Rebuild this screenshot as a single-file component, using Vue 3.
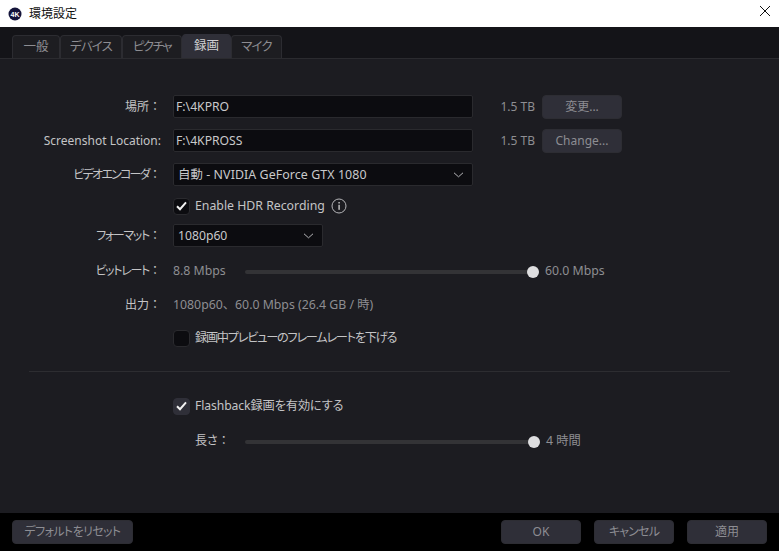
<script setup>
const tabs = [
  { label: '一般', w: 48, cls: '' },
  { label: 'デバイス', w: 62, cls: 't-k1' },
  { label: 'ピクチャ', w: 60, cls: 't-k2' },
  { label: '録画', w: 49, cls: 'active' },
  { label: 'マイク', w: 51, cls: 't-k1' },
]
</script>

<template>
  <div class="win">
    <header class="title">
      <svg class="logo" width="14" height="14" viewBox="0 0 14 14">
        <circle cx="7" cy="7" r="6.5" fill="#14143a" />
        <text x="7" y="9.6" text-anchor="middle" class="logo-t">4K</text>
      </svg>
      <span>環境設定</span>
      <svg class="close" width="12" height="12" viewBox="0 0 12 12">
        <path d="M1 1L11 11M11 1L1 11" stroke="#111" stroke-width="1" fill="none" />
      </svg>
    </header>

    <nav class="tabs">
      <div
        v-for="t in tabs"
        :key="t.label"
        class="tab"
        :class="t.cls"
        :style="{ width: t.w + 'px' }"
      >{{ t.label }}</div>
    </nav>

    <main class="body">
      <div class="row r-path">
        <label class="lbl">場所<span class="colon">：</span></label>
        <div class="field w300">F:\4KPRO</div>
        <span class="size">1.5 TB</span>
        <button class="btn change">変更...</button>
      </div>
      <div class="row r-path">
        <label class="lbl lat">Screenshot Location:</label>
        <div class="field w300">F:\4KPROSS</div>
        <span class="size">1.5 TB</span>
        <button class="btn change">Change...</button>
      </div>
      <div class="row r-path">
        <label class="lbl"><span class="k-enc">ビデオエンコーダ</span><span class="colon">：</span></label>
        <div class="field select w300">
          <span class="sel-wide">自動 - NVIDIA GeForce GTX 1080</span>
          <svg width="11" height="6" viewBox="0 0 11 6"><path d="M1 .8L5.5 4.8L10 .8" stroke="#b5b5b8" fill="none" /></svg>
        </div>
      </div>
      <div class="row r-hdr">
        <span class="lbl"></span>
        <span class="check on">
          <svg width="11" height="10" viewBox="0 0 11 10"><path d="M1 5.2L4 8.2L10 1.4" stroke="#f2f2f2" stroke-width="2" fill="none" /></svg>
        </span>
        <span class="chk-text hdr">Enable HDR Recording</span>
        <svg class="info" width="16" height="16" viewBox="0 0 16 16">
          <circle cx="8" cy="8" r="7" stroke="#b5b5b8" fill="none" />
          <rect x="7.4" y="6.8" width="1.4" height="5" fill="#c8c8c8" />
          <rect x="7.4" y="4" width="1.4" height="1.5" fill="#c8c8c8" />
        </svg>
      </div>
      <div class="row r-format">
        <label class="lbl"><span class="k-six">フォーマット</span><span class="colon">：</span></label>
        <div class="field select w150">
          <span>1080p60</span>
          <svg width="11" height="6" viewBox="0 0 11 6"><path d="M1 .8L5.5 4.8L10 .8" stroke="#b5b5b8" fill="none" /></svg>
        </div>
      </div>
      <div class="row r-bitrate">
        <label class="lbl"><span class="k-six">ビットレート</span><span class="colon">：</span></label>
        <span class="muted min">8.8 Mbps</span>
        <div class="slider s288"><i class="thumb"></i></div>
        <span class="muted max">60.0 Mbps</span>
      </div>
      <div class="row r-out">
        <label class="lbl">出力<span class="colon">：</span></label>
        <span class="muted">1080p60、60.0 Mbps (26.4 GB / 時)</span>
      </div>
      <div class="row r-low">
        <span class="lbl"></span>
        <span class="check"></span>
        <span class="chk-text k-low">録画中プレビューのフレームレートを下げる</span>
      </div>
      <hr class="sep" />
      <div class="row r-flash">
        <span class="lbl"></span>
        <span class="check on grey">
          <svg width="11" height="10" viewBox="0 0 11 10"><path d="M1 5.2L4 8.2L10 1.4" stroke="#f2f2f2" stroke-width="2" fill="none" /></svg>
        </span>
        <span class="chk-text k-flash">Flashback録画を有効にする</span>
      </div>
      <div class="row r-len">
        <span class="lbl"></span>
        <label class="len">長さ<span class="colon">：</span></label>
        <div class="slider s289"><i class="thumb"></i></div>
        <span class="muted max">4 時間</span>
      </div>
    </main>

    <footer class="foot">
      <button class="btn reset">デフォルトをリセット</button>
      <div class="foot-right">
        <button class="btn fb">OK</button>
        <button class="btn fb k-cancel">キャンセル</button>
        <button class="btn fb">適用</button>
      </div>
    </footer>
  </div>
</template>

<style>
html, body { margin: 0; background: #1c1c21; }
</style>

<style scoped>
.win {
  width: 779px;
  height: 551px;
  display: flex;
  flex-direction: column;
  overflow: hidden;
  background: #1c1c21;
  color: #c4c4c6;
  font: 12px/16px "Noto Sans", "Noto Sans CJK JP", sans-serif;
  font-feature-settings: "palt";
}
.colon { font-feature-settings: normal; letter-spacing: 0; }
.k-enc { letter-spacing: -1.75px; }
.k-six { letter-spacing: -1.3px; }
.k-low { letter-spacing: -1.25px; }
.k-flash { letter-spacing: -0.1px; }
.k-cancel { letter-spacing: -0.8px; }
.title {
  height: 27px;
  flex: none;
  background: #fff;
  color: #111;
  display: flex;
  align-items: center;
  padding: 0 8px 0 8px;
  gap: 7px;
  font-feature-settings: normal;
}
.logo-t { font: bold 7px "Liberation Sans", sans-serif; fill: #fff; }
.close { margin: 0 0 5px auto; }
.tabs {
  height: 32px;
  flex: none;
  box-sizing: border-box;
  background: #141418;
  border-bottom: 1px solid #2b2b2f;
  display: flex;
  align-items: flex-end;
  padding-left: 12px;
}
.tab {
  height: 23px;
  box-sizing: border-box;
  background: #1d1d21;
  border: 1px solid #2c2c31;
  border-bottom: 0;
  border-radius: 4px 4px 0 0;
  text-align: center;
  line-height: 22px;
  font-size: 12.5px;
  color: #8d8d92;
}
.t-k1 { letter-spacing: -0.8px; }
.t-k2 { letter-spacing: -1.5px; }
.tab.active {
  height: 24px;
  line-height: 22px;
  background: #2f2f38;
  border-color: #2f2f38;
  color: #cfcfd2;
}
.body {
  flex: 1;
  padding-top: 36px;
  box-sizing: border-box;
}
.row { display: flex; align-items: center; }
.lbl {
  width: 161px;
  flex: none;
  text-align: right;
  margin-right: 12px;
  color: #c4c4c6;
  white-space: nowrap;
}
.r-path { height: 23px; margin-bottom: 11px; }
.field {
  height: 23px;
  box-sizing: border-box;
  background: #0c0c10;
  border: 1px solid #2a2a2e;
  border-radius: 2px;
  padding: 0 2px;
  line-height: 21px;
  color: #c9c9cb;
  font-size: 12.2px;
}
.w300 { width: 300px; }
.w150 { width: 150px; }
.select {
  display: flex;
  align-items: center;
  justify-content: space-between;
  padding: 0 8px 0 4px;
}
.sel-wide { font-size: 12.4px; letter-spacing: 0.08px; }
.size { width: 62px; text-align: right; color: #8e8e92; margin-right: 7px; }
.btn {
  font: inherit;
  font-feature-settings: inherit;
  border: 1px solid #2d2d33;
  background: #2f2f38;
  border-radius: 4px;
  color: #8d8d93;
  padding: 0;
  height: 24px;
}
.change { width: 80px; }
.r-hdr { height: 18px; }
.check {
  width: 17px;
  height: 17px;
  box-sizing: border-box;
  border-radius: 4px;
  background: #0c0c10;
  border: 1px solid #2a2a2e;
  display: inline-flex;
  align-items: center;
  justify-content: center;
  margin-right: 5px;
  flex: none;
}
.check.grey { background: #2f2f38; border-color: #2f2f38; }
.chk-text { color: #c4c4c6; white-space: nowrap; font-size: 12.2px; }
.hdr { font-size: 12.3px; }
.info { margin-left: 6px; }
.r-format { height: 23px; margin-top: 9px; }
.r-bitrate { height: 20px; margin-top: 14px; }
.muted { color: #8e8e92; white-space: nowrap; font-size: 12.3px; font-feature-settings: normal; }
.min { width: 72px; flex: none; }
.slider {
  height: 4px;
  margin-top: 2px;
  background: #333336;
  border-radius: 2px;
  position: relative;
  flex: none;
}
.s288 { width: 288px; }
.s289 { width: 289px; }
.thumb {
  position: absolute;
  right: -6px;
  top: -4px;
  width: 12px;
  height: 12px;
  border-radius: 50%;
  background: #dedee0;
}
.max { margin-left: 12px; }
.r-out { height: 20px; margin-top: 14px; }
.r-low { height: 18px; margin-top: 14px; }
.sep {
  margin: 24px 49px 0 29px;
  border: 0;
  border-top: 1px solid #2d2d31;
}
.r-flash { height: 18px; margin-top: 25px; }
.r-len { height: 20px; margin-top: 16px; }
.len { width: 72px; flex: none; padding-left: 22px; box-sizing: border-box; white-space: nowrap; }
.foot {
  height: 38px;
  flex: none;
  background: #000;
  display: flex;
  align-items: flex-start;
  justify-content: space-between;
  padding: 7px 12px 0;
  box-sizing: border-box;
}
.reset { width: 121px; letter-spacing: -0.6px; }
.foot-right { display: flex; gap: 13px; }
.fb { width: 80px; }
</style>
